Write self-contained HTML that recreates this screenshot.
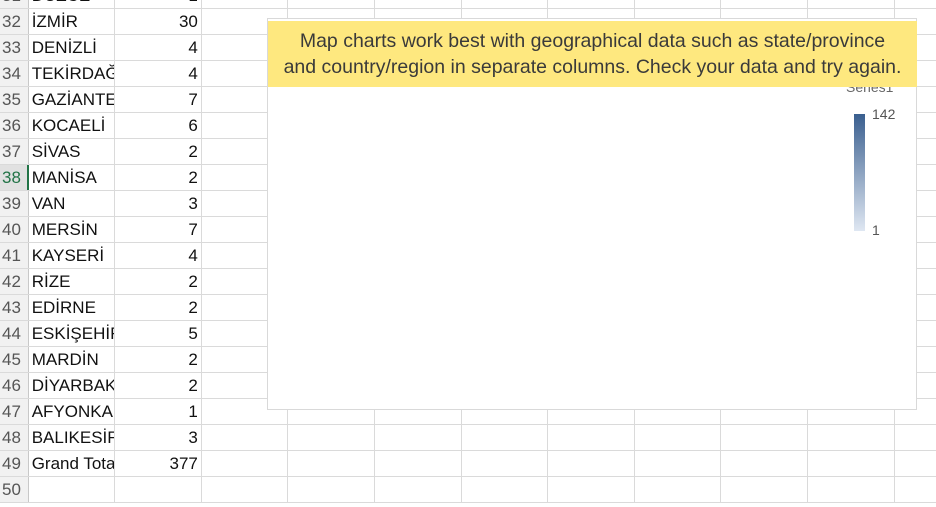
<!DOCTYPE html>
<html><head><meta charset="utf-8"><style>
*{box-sizing:border-box;margin:0;padding:0}
body{width:936px;height:507px;overflow:hidden;background:#fff;font-family:"Liberation Sans",sans-serif;position:relative}
.grid{position:absolute;left:0;top:-17.5px;width:1000px}
.r{height:26.05px;display:flex;border-bottom:1px solid #dadada}
.r div{flex-shrink:0;border-right:1px solid #dadada;height:100%;font-size:17px;line-height:26px;white-space:nowrap;overflow:hidden}
.h{width:28.7px;background:#f1f1f1;color:#555;padding-left:2px;border-right:1px solid #c8c8c8!important}
.a{width:86.6px;padding-left:3px;color:#111}
.b{width:86.6px;text-align:right;padding-right:3px;color:#111}
.c{width:86.6px}
.sel .h{color:#217346;background:#e1e1e1;border-right:2px solid #217346!important}
.chart{position:absolute;left:267px;top:18px;width:650px;height:392px;background:#fff;border:1px solid #d9d9d9}
.ban{position:absolute;left:0;top:2px;width:649px;height:66px;background:#fee87f;color:#3a3a3a;font-size:19.5px;line-height:26px;text-align:center;padding-top:7px;white-space:nowrap}
.ser{position:absolute;left:578px;top:60px;font-size:14px;color:#666}
.bar{position:absolute;left:586px;top:95px;width:11px;height:117px;background:linear-gradient(#3a5f8f,#dfe7f2)}
.l{position:absolute;font-size:14px;color:#555}
</style></head><body>
<div class="grid">
<div class="r"><div class="h">31</div><div class="a">DÜZCE</div><div class="b">1</div><div class="c"></div><div class="c"></div><div class="c"></div><div class="c"></div><div class="c"></div><div class="c"></div><div class="c"></div><div class="c"></div><div class="c"></div></div>
<div class="r"><div class="h">32</div><div class="a">İZMİR</div><div class="b">30</div><div class="c"></div><div class="c"></div><div class="c"></div><div class="c"></div><div class="c"></div><div class="c"></div><div class="c"></div><div class="c"></div><div class="c"></div></div>
<div class="r"><div class="h">33</div><div class="a">DENİZLİ</div><div class="b">4</div><div class="c"></div><div class="c"></div><div class="c"></div><div class="c"></div><div class="c"></div><div class="c"></div><div class="c"></div><div class="c"></div><div class="c"></div></div>
<div class="r"><div class="h">34</div><div class="a">TEKİRDAĞ</div><div class="b">4</div><div class="c"></div><div class="c"></div><div class="c"></div><div class="c"></div><div class="c"></div><div class="c"></div><div class="c"></div><div class="c"></div><div class="c"></div></div>
<div class="r"><div class="h">35</div><div class="a">GAZİANTEP</div><div class="b">7</div><div class="c"></div><div class="c"></div><div class="c"></div><div class="c"></div><div class="c"></div><div class="c"></div><div class="c"></div><div class="c"></div><div class="c"></div></div>
<div class="r"><div class="h">36</div><div class="a">KOCAELİ</div><div class="b">6</div><div class="c"></div><div class="c"></div><div class="c"></div><div class="c"></div><div class="c"></div><div class="c"></div><div class="c"></div><div class="c"></div><div class="c"></div></div>
<div class="r"><div class="h">37</div><div class="a">SİVAS</div><div class="b">2</div><div class="c"></div><div class="c"></div><div class="c"></div><div class="c"></div><div class="c"></div><div class="c"></div><div class="c"></div><div class="c"></div><div class="c"></div></div>
<div class="r sel"><div class="h">38</div><div class="a">MANİSA</div><div class="b">2</div><div class="c"></div><div class="c"></div><div class="c"></div><div class="c"></div><div class="c"></div><div class="c"></div><div class="c"></div><div class="c"></div><div class="c"></div></div>
<div class="r"><div class="h">39</div><div class="a">VAN</div><div class="b">3</div><div class="c"></div><div class="c"></div><div class="c"></div><div class="c"></div><div class="c"></div><div class="c"></div><div class="c"></div><div class="c"></div><div class="c"></div></div>
<div class="r"><div class="h">40</div><div class="a">MERSİN</div><div class="b">7</div><div class="c"></div><div class="c"></div><div class="c"></div><div class="c"></div><div class="c"></div><div class="c"></div><div class="c"></div><div class="c"></div><div class="c"></div></div>
<div class="r"><div class="h">41</div><div class="a">KAYSERİ</div><div class="b">4</div><div class="c"></div><div class="c"></div><div class="c"></div><div class="c"></div><div class="c"></div><div class="c"></div><div class="c"></div><div class="c"></div><div class="c"></div></div>
<div class="r"><div class="h">42</div><div class="a">RİZE</div><div class="b">2</div><div class="c"></div><div class="c"></div><div class="c"></div><div class="c"></div><div class="c"></div><div class="c"></div><div class="c"></div><div class="c"></div><div class="c"></div></div>
<div class="r"><div class="h">43</div><div class="a">EDİRNE</div><div class="b">2</div><div class="c"></div><div class="c"></div><div class="c"></div><div class="c"></div><div class="c"></div><div class="c"></div><div class="c"></div><div class="c"></div><div class="c"></div></div>
<div class="r"><div class="h">44</div><div class="a">ESKİŞEHİR</div><div class="b">5</div><div class="c"></div><div class="c"></div><div class="c"></div><div class="c"></div><div class="c"></div><div class="c"></div><div class="c"></div><div class="c"></div><div class="c"></div></div>
<div class="r"><div class="h">45</div><div class="a">MARDİN</div><div class="b">2</div><div class="c"></div><div class="c"></div><div class="c"></div><div class="c"></div><div class="c"></div><div class="c"></div><div class="c"></div><div class="c"></div><div class="c"></div></div>
<div class="r"><div class="h">46</div><div class="a">DİYARBAKIR</div><div class="b">2</div><div class="c"></div><div class="c"></div><div class="c"></div><div class="c"></div><div class="c"></div><div class="c"></div><div class="c"></div><div class="c"></div><div class="c"></div></div>
<div class="r"><div class="h">47</div><div class="a">AFYONKARAHİSAR</div><div class="b">1</div><div class="c"></div><div class="c"></div><div class="c"></div><div class="c"></div><div class="c"></div><div class="c"></div><div class="c"></div><div class="c"></div><div class="c"></div></div>
<div class="r"><div class="h">48</div><div class="a">BALIKESİR</div><div class="b">3</div><div class="c"></div><div class="c"></div><div class="c"></div><div class="c"></div><div class="c"></div><div class="c"></div><div class="c"></div><div class="c"></div><div class="c"></div></div>
<div class="r"><div class="h">49</div><div class="a">Grand Total</div><div class="b">377</div><div class="c"></div><div class="c"></div><div class="c"></div><div class="c"></div><div class="c"></div><div class="c"></div><div class="c"></div><div class="c"></div><div class="c"></div></div>
<div class="r"><div class="h">50</div><div class="a"></div><div class="b"></div><div class="c"></div><div class="c"></div><div class="c"></div><div class="c"></div><div class="c"></div><div class="c"></div><div class="c"></div><div class="c"></div><div class="c"></div></div>
</div>
<div class="chart">
<div class="ser">Series1</div>
<div class="ban">Map charts work best with geographical data such as state/province<br>and country/region in separate columns. Check your data and try again.</div>
<div class="bar"></div>
<div class="l" style="left:604px;top:87px">142</div>
<div class="l" style="left:604px;top:203px">1</div>
</div>
</body></html>
